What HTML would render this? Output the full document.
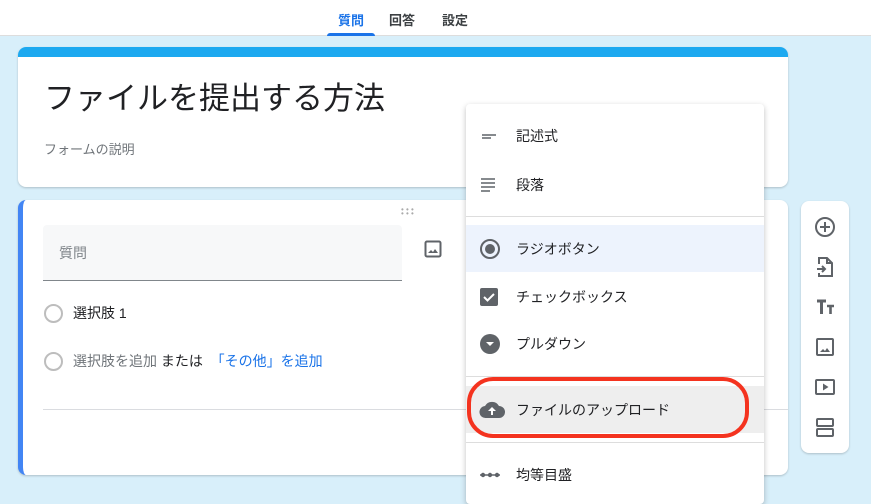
<!DOCTYPE html>
<html><head><meta charset="utf-8"><style>
*{margin:0;padding:0;box-sizing:border-box}
body{width:871px;height:488px;overflow:hidden;background:#d8effa;font-family:"Liberation Sans","Noto Sans CJK JP",sans-serif;position:relative;color:#202124}
.hdr{position:absolute;left:0;top:0;width:871px;height:36px;background:#fff;border-bottom:1px solid #ddd}
.tab{position:absolute;top:10px;font-size:13px;font-weight:bold;color:#3c4043}
.abs{position:absolute}
.card{position:absolute;background:#fff;border-radius:8px;box-shadow:0 1px 2px rgba(0,0,0,.2)}
.mi{position:absolute;left:0;width:298px;height:47px;font-size:14px;color:#202124}
.mi span{position:absolute;left:50px;top:50%;transform:translateY(-50%)}
.mi svg{position:absolute;left:13px;top:50%;transform:translateY(-50%)}
.div{position:absolute;left:0;width:298px;height:1px;background:#ddd}
.ti{position:absolute;left:13px}
</style></head><body>
<div class="hdr">
<div class="tab" style="left:338px;color:#1a73e8">質問</div>
<div class="tab" style="left:389px">回答</div>
<div class="tab" style="left:442px">設定</div>
<div class="abs" style="left:327px;top:33px;width:48px;height:3px;background:#1a73e8;border-radius:3px 3px 0 0"></div>
</div>
<div class="card" style="left:18px;top:47px;width:770px;height:140px;overflow:hidden">
<div class="abs" style="left:0;top:0;width:770px;height:10px;background:#1da9f0"></div>
<div class="abs" style="left:26px;top:32px;font-size:31px;line-height:40px;color:#202124">ファイルを提出する方法</div>
<div class="abs" style="left:26px;top:92px;font-size:13px;color:#70757a">フォームの説明</div>
</div>
<div class="card" style="left:18px;top:200px;width:770px;height:275px;border-left:5px solid #4285f4;overflow:hidden">
<div class="abs" style="left:378px;top:8px;width:16px;color:#aaa;font-size:8px;letter-spacing:0;line-height:4px">• • •<br>• • •</div>
<div class="abs" style="left:20px;top:25px;width:359px;height:56px;background:#f7f8f9;border-bottom:1px solid #80868b;border-radius:4px 4px 0 0"></div>
<div class="abs" style="left:36px;top:43px;font-size:14px;color:#80868b">質問</div>
<svg class="abs" style="left:400px;top:39px" width="20" height="20" viewBox="0 0 20 20"><rect x="2.5" y="2.5" width="15" height="15" rx="1.5" fill="none" stroke="#5f6368" stroke-width="2"/><path d="M5 14l3-3 2 2 2-3 3 4z" fill="#5f6368"/></svg>
<div class="abs" style="left:21px;top:104px;width:19px;height:19px;border:2px solid #bdbdbd;border-radius:50%"></div>
<div class="abs" style="left:50px;top:103px;font-size:14px">選択肢 1</div>
<div class="abs" style="left:21px;top:152px;width:19px;height:19px;border:2px solid #bdbdbd;border-radius:50%"></div>
<div class="abs" style="left:50px;top:151px;font-size:14px;color:#70757a">選択肢を追加 <span style="color:#202124">または</span> &nbsp;<span style="color:#1a73e8">「その他」を追加</span></div>
<div class="abs" style="left:20px;top:209px;width:760px;height:1px;background:#dadce0"></div>
</div>
<div class="card" style="left:801px;top:201px;width:48px;height:252px">
<svg class="ti" style="top:15px" width="22" height="22" viewBox="0 0 22 22" fill="none" stroke="#5f6368" stroke-width="2"><circle cx="11" cy="11" r="9"/><path d="M11 6v10M6 11h10"/></svg>
<svg class="ti" style="top:55px" width="22" height="22" viewBox="0 0 22 22" fill="none" stroke="#5f6368" stroke-width="2"><path d="M5 8V2h8l5 5v13H5v-3M13 2v5h5M3 13h8M8 10l3 3-3 3"/></svg>
<svg class="ti" style="top:95px" width="22" height="22" viewBox="0 0 22 22" fill="none" stroke="#5f6368"><path d="M3 5h9M7.5 5v13" stroke-width="3"/><path d="M13 10h7M16.5 10v8" stroke-width="2.6"/></svg>
<svg class="ti" style="top:135px" width="22" height="22" viewBox="0 0 22 22" fill="none" stroke="#5f6368" stroke-width="2"><rect x="3" y="3" width="16" height="16" rx="1"/><path d="M6 16l3-3 2 2 2-3 3 4z" fill="#5f6368" stroke="none"/></svg>
<svg class="ti" style="top:175px" width="22" height="22" viewBox="0 0 22 22" fill="none" stroke="#5f6368" stroke-width="2"><rect x="2" y="4" width="18" height="14" rx="1"/><path d="M9 7.5v7l5.5-3.5z" fill="#5f6368" stroke="none"/></svg>
<svg class="ti" style="top:215px" width="22" height="22" viewBox="0 0 22 22" fill="none" stroke="#5f6368" stroke-width="2"><rect x="3" y="3" width="16" height="7" rx="1"/><rect x="3" y="13" width="16" height="7" rx="1"/></svg>
</div>
<div class="abs" style="left:466px;top:104px;width:298px;height:400px;background:#fff;border-radius:4px;box-shadow:0 2px 6px rgba(0,0,0,.25)">
<div class="mi" style="top:8px"><svg width="18" height="18" viewBox="0 0 18 18"><path d="M3 8h14M3 11h9" stroke="#5f6368" stroke-width="1.6"/></svg><span>記述式</span></div>
<div class="mi" style="top:57px"><svg width="18" height="18" viewBox="0 0 18 18"><path d="M2 3h14M2 7h14M2 11h14M2 15h9" stroke="#5f6368" stroke-width="1.4"/></svg><span>段落</span></div>
<div class="div" style="top:112px"></div>
<div class="mi" style="top:121px;background:#edf3fd"><svg width="22" height="22" viewBox="0 0 22 22"><circle cx="11" cy="11" r="9" fill="none" stroke="#5f6368" stroke-width="2"/><circle cx="11" cy="11" r="5" fill="#5f6368"/></svg><span>ラジオボタン</span></div>
<div class="mi" style="top:169px"><svg width="20" height="20" viewBox="0 0 20 20"><rect x="1" y="1" width="18" height="18" rx="2" fill="#5f6368"/><path d="M5 10l3.5 3.5L15 7" stroke="#fff" stroke-width="2" fill="none"/></svg><span>チェックボックス</span></div>
<div class="mi" style="top:216px"><svg width="22" height="22" viewBox="0 0 22 22"><circle cx="11" cy="11" r="10" fill="#5f6368"/><path d="M7 9h8l-4 4z" fill="#fff"/></svg><span>プルダウン</span></div>
<div class="div" style="top:272px"></div>
<div class="mi" style="top:282px;background:#eeeeee"><svg width="26" height="20" viewBox="0 0 26 20"><path d="M7 18a6 6 0 0 1-1-12A8 8 0 0 1 20 6a6 6 0 0 1 0 12z" fill="#5f6368"/><path d="M13 7l-4 4h3v4h2v-4h3z" fill="#fff"/></svg><span>ファイルのアップロード</span></div>
<div class="div" style="top:338px"></div>
<div class="mi" style="top:347px"><svg width="22" height="10" viewBox="0 0 22 10"><path d="M1 5h20" stroke="#5f6368" stroke-width="1.5"/><circle cx="4" cy="5" r="2.2" fill="#5f6368"/><circle cx="11" cy="5" r="2.2" fill="#5f6368"/><circle cx="18" cy="5" r="2.2" fill="#5f6368"/></svg><span>均等目盛</span></div>
</div>
<div class="abs" style="left:467px;top:377px;width:282px;height:61px;border:4px solid #f4331f;border-radius:26px"></div>
</body></html>
